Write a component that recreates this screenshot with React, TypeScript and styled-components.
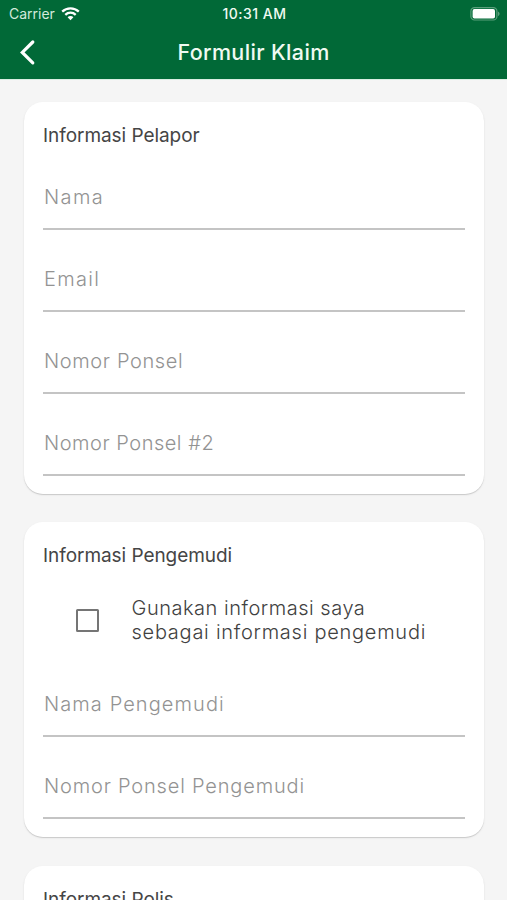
import React from "react";
import styled, { createGlobalStyle } from "styled-components";

const GlobalStyle = createGlobalStyle`
  * { box-sizing: border-box; }
  html, body { margin: 0; background: #f5f5f5; }
  body { font-family: Inter, Roboto, "Liberation Sans", sans-serif; }
`;

const Screen = styled.div`
  width: 507px;
  height: 900px;
  overflow: hidden;
  display: flex;
  flex-direction: column;
  background: #f5f5f5;
`;

const Header = styled.header`
  flex: none;
  height: 79px;
  background: #016937;
  color: #f0faf2;
  box-shadow: 0 1px 0 #d9eee2;
`;

const StatusBar = styled.div`
  display: grid;
  grid-template-columns: 1fr auto 1fr;
  align-items: center;
  height: 27px;
  padding: 0 7px 0 9px;
  font-size: 14px;
  line-height: 27px;
`;

const Carrier = styled.div`
  display: flex;
  align-items: center;
  gap: 6px;
  color: #d3eadb;
`;

const Clock = styled.div`
  font-weight: 500;
  letter-spacing: 0.5px;
`;

const BatterySlot = styled.div`
  display: flex;
  justify-content: flex-end;
`;

const NavBar = styled.div`
  display: grid;
  grid-template-columns: 56px 1fr 56px;
  align-items: center;
  height: 50px;
`;

const BackButton = styled.button`
  display: flex;
  width: 56px;
  height: 50px;
  padding: 12px 0 0 18px;
  border: 0;
  background: none;
  color: #ffffff;
`;

const Title = styled.h1`
  margin: 0;
  text-align: center;
  font-size: 21.5px;
  line-height: 50px;
  font-weight: 500;
  letter-spacing: 0.35px;
`;

const Form = styled.main`
  display: flex;
  flex-direction: column;
  gap: 28.4px;
  padding: 23px 23.5px 0 24px;
`;

const Card = styled.section`
  flex: none;
  padding: 20px 19px 18px;
  background: #ffffff;
  border-radius: 19px;
  box-shadow: 0 1px 1px rgba(0, 0, 0, 0.15), 0 1px 3px rgba(0, 0, 0, 0.05);
`;

const CardTitle = styled.h2`
  margin: 0;
  height: 26px;
  font-size: 19px;
  line-height: 27px;
  font-weight: 400;
  letter-spacing: -0.05px;
  color: #454545;
`;

const Field = styled.input<{ $tracking: number }>`
  display: block;
  width: 100%;
  height: 82px;
  padding: 18px 0 0 1px;
  border: 0;
  border-bottom: 2px solid #c4c4c4;
  border-radius: 0;
  outline: 0;
  background: none;
  font: 350 20px Inter, sans-serif;
  letter-spacing: ${(p) => p.$tracking}px;
  color: #414141;

  &::placeholder {
    color: #939393;
    opacity: 1;
  }
`;

const Option = styled.label`
  display: flex;
  align-items: center;
  height: 70px;
  margin-top: 17px;
  padding-left: 33px;
`;

const Checkbox = styled.input`
  appearance: none;
  flex: none;
  width: 23px;
  height: 23px;
  margin: 0 32.5px 0 0;
  border: 2px solid #757575;
  border-radius: 1.5px;
  background: #ffffff;
`;

const OptionText = styled.span`
  display: flex;
  flex-direction: column;
`;

const OptionLine = styled.span<{ $tracking: number }>`
  font-size: 20px;
  font-weight: 350;
  line-height: 24.5px;
  letter-spacing: ${(p) => p.$tracking}px;
  white-space: nowrap;
  color: #414141;
`;

const reporterFields = [
  { label: "Nama", tracking: 1.4 },
  { label: "Email", tracking: 1.3 },
  { label: "Nomor Ponsel", tracking: 0.62 },
  { label: "Nomor Ponsel #2", tracking: 0.52 },
];

const driverFields = [
  { label: "Nama Pengemudi", tracking: 1.08 },
  { label: "Nomor Ponsel Pengemudi", tracking: 0.82 },
];

function WifiIcon() {
  return (
    <svg width="19" height="14" viewBox="0 0 19 14" fill="none" stroke="#fff" strokeWidth="2.3">
      <path d="M1.2 4.6C5.8.2 13.2.2 17.8 4.6" />
      <path d="M4.3 7.8c2.9-2.8 7.5-2.8 10.4 0" />
      <path d="M6.6 10.2c1.6-1.5 4.2-1.5 5.8 0L9.5 13.2z" fill="#fff" stroke="none" />
    </svg>
  );
}

function BatteryIcon() {
  return (
    <svg width="30" height="14" viewBox="0 0 30 14">
      <rect x=".9" y=".6" width="26" height="12.4" rx="3.6" fill="none" stroke="#5a9f7b" strokeWidth="1.2" />
      <rect x="2.6" y="2.1" width="22.4" height="9.4" rx="1.8" fill="#fff" />
      <path d="M28 4.5c2.1.8 2.1 3.8 0 4.6z" fill="#5a9f7b" />
    </svg>
  );
}

function BackIcon() {
  return (
    <svg width="18" height="28" viewBox="0 0 18 28" fill="none" stroke="currentColor" strokeWidth="3.2">
      <path d="M14.8 3 4.3 13.4 14.8 23.8" strokeLinejoin="miter" strokeLinecap="round" />
    </svg>
  );
}

export default function App() {
  return (
    <Screen>
      <GlobalStyle />
      <Header>
        <StatusBar>
          <Carrier>
            Carrier
            <WifiIcon />
          </Carrier>
          <Clock>10:31 AM</Clock>
          <BatterySlot>
            <BatteryIcon />
          </BatterySlot>
        </StatusBar>
        <NavBar>
          <BackButton aria-label="Kembali">
            <BackIcon />
          </BackButton>
          <Title>Formulir Klaim</Title>
        </NavBar>
      </Header>
      <Form>
        <Card>
          <CardTitle>Informasi Pelapor</CardTitle>
          {reporterFields.map((f) => (
            <Field key={f.label} placeholder={f.label} $tracking={f.tracking} />
          ))}
        </Card>
        <Card>
          <CardTitle>Informasi Pengemudi</CardTitle>
          <Option>
            <Checkbox type="checkbox" />
            <OptionText>
              <OptionLine $tracking={0.52}>Gunakan informasi saya</OptionLine>
              <OptionLine $tracking={0.74}>sebagai informasi pengemudi</OptionLine>
            </OptionText>
          </Option>
          {driverFields.map((f) => (
            <Field key={f.label} placeholder={f.label} $tracking={f.tracking} />
          ))}
        </Card>
        <Card>
          <CardTitle>Informasi Polis</CardTitle>
        </Card>
      </Form>
    </Screen>
  );
}
